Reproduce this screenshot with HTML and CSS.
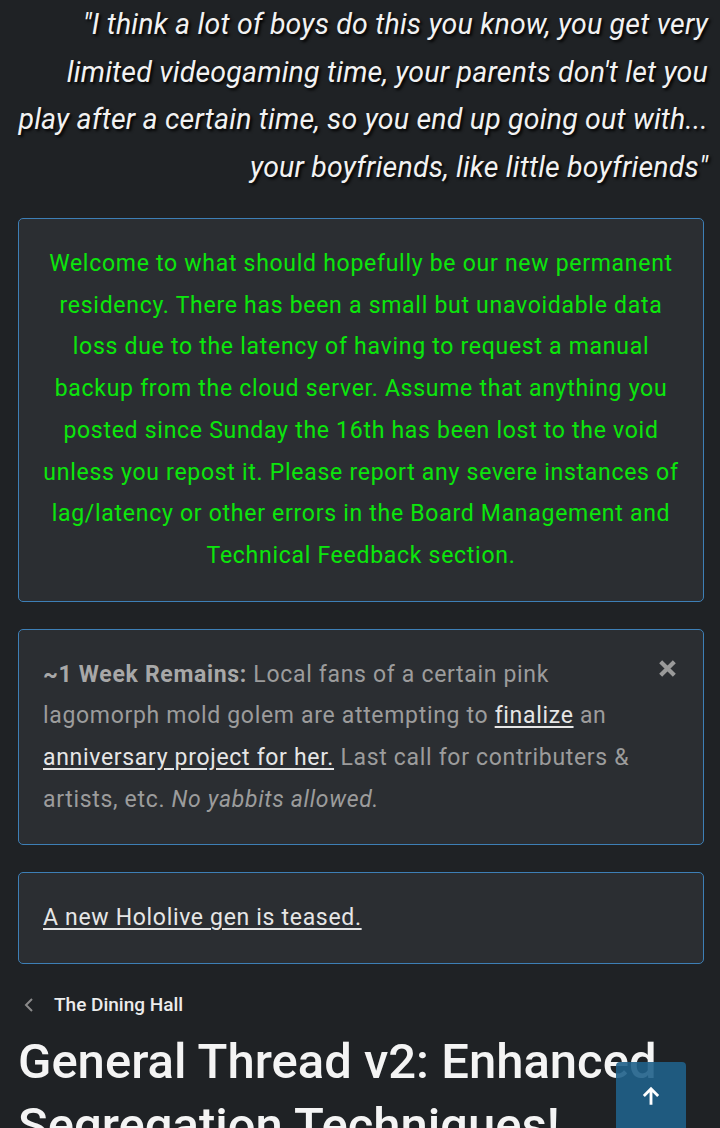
FILE: index.html
```html
<!DOCTYPE html>
<html lang="en">
<head>
    <meta charset="UTF-8">
    <meta name="viewport" content="width=device-width, initial-scale=1.0">
    <title>General Thread v2</title>
    <link rel="stylesheet" href="styles.css">
</head>
<body>
    <div class="page">
        <p class="quote">"I think a lot of boys do this you know, you get very limited videogaming time, your parents don't let you play after a certain time, so you end up going out with... your boyfriends, like little boyfriends"</p>

        <div class="notice notice-green">
            Welcome to what should hopefully be our new permanent residency. There has been a small but unavoidable data loss due to the latency of having to request a manual backup from the cloud server. Assume that anything you posted since Sunday the 16th has been lost to the void unless you repost it. Please report any severe instances of lag/latency or other errors in the Board Management and Technical Feedback section.
        </div>

        <div class="notice notice-dismiss">
            <button class="dismiss" type="button" aria-label="Dismiss">
                <svg viewBox="0 0 20 20" width="21" height="21">
                    <path d="M3.5 3.5 L16.5 16.5 M16.5 3.5 L3.5 16.5" stroke="currentColor" stroke-width="4"/>
                </svg>
            </button>
            <strong>~1 Week Remains:</strong> Local fans of a certain pink lagomorph mold golem are attempting to <a href="#">finalize</a> an <a href="#">anniversary project for her.</a> Last call for contributers &amp; artists, etc. <em>No yabbits allowed.</em>
        </div>

        <div class="notice">
            <a href="#">A new Hololive gen is teased.</a>
        </div>

        <nav class="crumbs">
            <a href="#">
                <svg class="chev" viewBox="0 0 10 16" width="10" height="16">
                    <path d="M8 2 L2 8 L8 14" fill="none" stroke="currentColor" stroke-width="2"/>
                </svg>
                <span>The Dining Hall</span>
            </a>
        </nav>

        <h1 class="thread-title">General Thread v2: Enhanced Segregation Techniques!</h1>
    </div>

    <a class="to-top" href="#">
        <svg viewBox="0 0 20 20" width="22" height="22">
            <path d="M10 18 V3.5 M3.5 10 L10 3.5 L16.5 10" fill="none" stroke="currentColor" stroke-width="2.6"/>
        </svg>
    </a>
</body>
</html>
```

FILE: styles.css
```css
body {
    margin: 0;
    background-color: #1f2225;
    color: #e8e8e8;
    font-family: Roboto, "Noto Sans", sans-serif;
    overflow: hidden;
}

.page {
    padding: 0 16px 0 18px;
}

.quote {
    margin: 0 -4px 27px 0;
    padding-top: 1px;
    text-align: right;
    font-style: italic;
    font-size: 28.5px;
    letter-spacing: 0.2px;
    line-height: 47.5px;
    color: #f2f2f2;
    text-shadow: 2px 2px 3px #000;
}

.notice {
    position: relative;
    background-color: #2b2e32;
    border: 1px solid #3d7fb6;
    border-radius: 5px;
    padding: 24px;
    margin-bottom: 27px;
    font-size: 23px;
    letter-spacing: 0.68px;
    line-height: 41.7px;
    color: #9c9c9c;
}

.notice a {
    color: #e6e6e6;
    text-decoration: underline;
    text-underline-offset: 3px;
}

.notice-green {
    color: #0ce60c;
    text-align: center;
    letter-spacing: 0.72px;
}

.notice-dismiss {
    padding-right: 60px;
}

.notice-dismiss strong {
    color: #a8a8a8;
    font-weight: 700;
}

.dismiss {
    position: absolute;
    top: 28px;
    right: 25px;
    background: none;
    border: none;
    padding: 0;
    color: #9a9a9a;
}

.crumbs {
    padding-top: 2px;
}

.crumbs a {
    display: flex;
    align-items: center;
    gap: 20px;
    padding-left: 6px;
    color: #ececec;
    text-decoration: none;
    font-size: 19px;
    font-weight: 500;
}

.chev {
    color: #8a8a8a;
}

.thread-title {
    margin: 14px 0 0;
    font-size: 49px;
    font-weight: 500;
    line-height: 64px;
    color: #f4f4f4;
}

.to-top {
    position: fixed;
    left: 616px;
    top: 1062px;
    width: 70px;
    height: 80px;
    display: flex;
    justify-content: center;
    padding-top: 23px;
    box-sizing: border-box;
    background-color: rgba(31, 96, 138, 0.9);
    border-radius: 4px;
    color: #fff;
}
```
